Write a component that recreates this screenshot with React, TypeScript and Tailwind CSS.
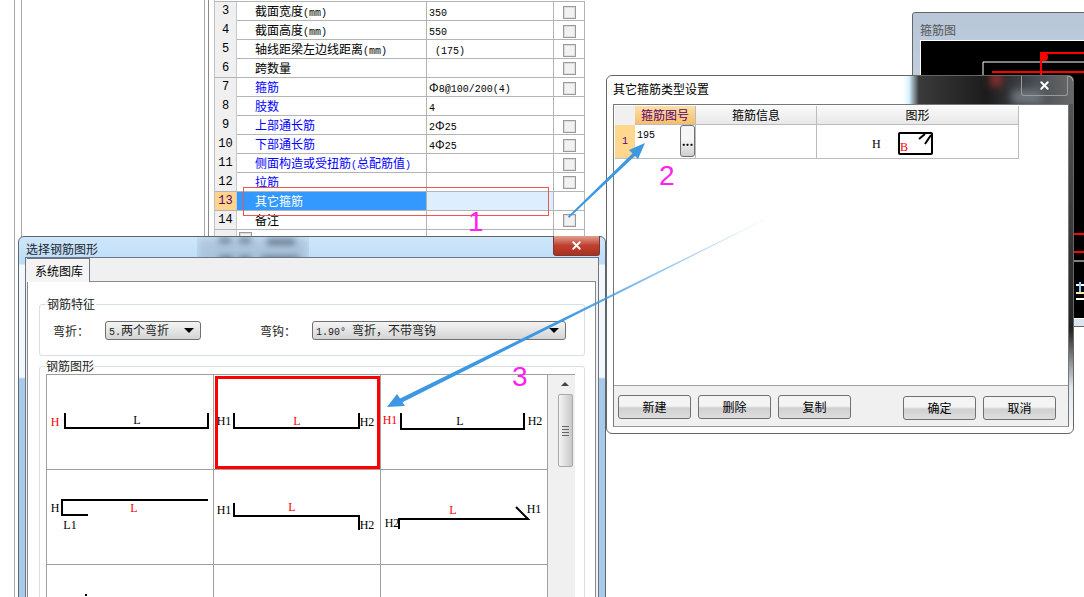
import type { ReactNode } from "react";
import { X } from "lucide-react";

const cjk = "font-['Noto_Sans_CJK_SC','Liberation_Sans',sans-serif]";
const mono = "font-['Liberation_Mono',monospace] text-[10px]";

interface Row {
  no: number;
  name: ReactNode;
  value?: ReactNode;
  link?: boolean;
  check?: boolean;
  active?: boolean;
}

const M = ({ children }: { children: ReactNode }) => <span className={mono}>{children}</span>;

const CheckBox = () => (
  <span className="block h-[13px] w-[13px] border border-[#9a9a9a] bg-[#f2f2f2] shadow-[inset_1px_1px_0_#dcdcdc,inset_-1px_-1px_0_#e2e2e2]" />
);

const rows: Row[] = [
  { no: 3, name: <>截面宽度<M>(mm)</M></>, value: <M>350</M>, check: true },
  { no: 4, name: <>截面高度<M>(mm)</M></>, value: <M>550</M>, check: true },
  { no: 5, name: <>轴线距梁左边线距离<M>(mm)</M></>, value: <M> (175)</M>, check: true },
  { no: 6, name: "跨数量", check: true },
  { no: 7, name: "箍筋", value: <>Φ<M>8@100/200(4)</M></>, link: true, check: true },
  { no: 8, name: "肢数", value: <M>4</M>, link: true },
  { no: 9, name: "上部通长筋", value: <><M>2</M>Φ<M>25</M></>, link: true, check: true },
  { no: 10, name: "下部通长筋", value: <><M>4</M>Φ<M>25</M></>, link: true, check: true },
  { no: 11, name: <>侧面构造或受扭筋<M>(</M>总配筋值<M>)</M></>, link: true, check: true },
  { no: 12, name: "拉筋", link: true, check: true },
  { no: 13, name: "其它箍筋", active: true },
  { no: 14, name: "备注", check: true },
];

const PropertyTable = () => (
  <div className="mt-[1px] w-[370px] border-t border-[#b4b4b4]">
    {rows.map((r) => (
      <div
        key={r.no}
        className="grid h-[19px] grid-cols-[22px_190px_127px_31px] border-b border-[#b4b4b4] text-[12px] leading-[18px]"
      >
        <div
          className={`border-r border-[#c8c8c8] text-center font-['Liberation_Mono',monospace] text-[12px] leading-[18px] ${
            r.active ? "bg-[#ffd48c] text-[#5a006e]" : "bg-[#f0f0f0] text-black"
          }`}
        >
          {r.no}
        </div>
        <div
          className={`border-r border-[#b4b4b4] pl-[18px] ${
            r.active ? "bg-[#3399ff] text-white" : r.link ? "text-[#0000ff]" : "text-black"
          }`}
        >
          {r.name}
        </div>
        <div className={`whitespace-pre border-r border-[#b4b4b4] pl-[2px] ${r.active ? "bg-[#ddeeff]" : ""}`}>
          {r.value}
        </div>
        <div className="flex items-center justify-center border-r border-[#b4b4b4]">{r.check && <CheckBox />}</div>
      </div>
    ))}
    <div className="grid h-[19px] grid-cols-[22px_190px_127px_31px]">
      <div className="border-r border-[#c8c8c8] bg-[#f0f0f0]" />
      <div className="border-r border-[#b4b4b4] pl-[2px] pt-[2px]">
        <CheckBox />
      </div>
      <div className="border-r border-[#b4b4b4]" />
      <div className="border-r border-[#b4b4b4]" />
    </div>
  </div>
);

const BackgroundApp = () => (
  <div className="flex h-full">
    <div className="w-[14px]" />
    <div className="w-[8px] border-x border-[#a8a8a8]" />
    <div className="w-[183px] border-r border-[#a8a8a8]" />
    <div className="w-[4px] border-r border-[#8a8a8a]" />
    <div className="w-[6px] border-r border-[#c0c0c0]" />
    <PropertyTable />
  </div>
);

const StirrupDrawing = () => (
  <div className="absolute left-[912px] top-[12px] flex h-[315px] w-[190px] flex-col rounded-t-[3px] border border-[#666] bg-[linear-gradient(#b8c7d8,#dce6f0)]">
    <div className="h-[28px] pl-[7px] pt-[9px] text-[12px] leading-[16px] text-[#555]">箍筋图</div>
    <div className="ml-[8px] h-[277px] bg-black outline outline-1 outline-white">
      <svg width="163" height="277" viewBox="921 41 163 277">
        <polyline points="983,75 983,62 1084,62" fill="none" stroke="#fff" />
        <polyline points="1084,53 1041,53 1041,75" fill="none" stroke="#f00" strokeWidth="2" />
        <circle cx="1044" cy="57" r="4" fill="#f00" />
        <line x1="992" y1="72" x2="1084" y2="72" stroke="#f00" strokeWidth="2" />
        <line x1="1074" y1="234" x2="1084" y2="234" stroke="#f00" strokeWidth="2" />
        <line x1="1074" y1="252" x2="1084" y2="252" stroke="#f00" strokeWidth="2" />
        <line x1="1074" y1="261" x2="1084" y2="261" stroke="#fff" />
        <rect x="1076" y="284" width="8" height="2" fill="#fff" />
        <rect x="1079" y="282" width="2" height="12" fill="#7fd0ff" />
        <rect x="1076" y="292" width="8" height="2" fill="#ffe9a0" />
        <rect x="1076" y="298" width="8" height="2" fill="#fff" />
      </svg>
    </div>
  </div>
);

const Btn = ({ label, className = "" }: { label: string; className?: string }) => (
  <button
    type="button"
    className={`h-[24px] w-[73px] rounded-[3px] border border-[#707070] bg-[linear-gradient(#f4f4f4_45%,#d0d0d0_55%,#dedede)] text-[12px] leading-[22px] text-black ${className}`}
  >
    {label}
  </button>
);

const OtherStirrupDialog = () => (
  <div className="absolute left-[606px] top-[75px] flex h-[359px] w-[468px] flex-col rounded-[6px] border border-[#666] bg-white pl-[6px] pr-[4px]">
    <div className="absolute inset-x-0 top-0 h-[28px] overflow-hidden rounded-t-[6px] bg-[linear-gradient(90deg,#fff_296px,#d6f4ff_302px,#3a3a3a_312px,#1c1c1c_380px,#4a4f55_430px,#6a6a6a_468px)]">
      <div className="absolute left-[384px] top-[-4px] h-[14px] w-[10px] bg-[#a03030] blur-[4px]" />
      <div className="absolute left-[405px] top-[14px] h-[14px] w-[30px] bg-[#70787e] blur-[4px]" />
    </div>
    <div className="absolute right-[5px] top-0 flex h-[20px] w-[47px] items-center justify-center rounded-b-[3px] border border-t-0 border-[#9a9a9a] text-white">
      <X size={13} strokeWidth={3.5} />
    </div>
    <div className="absolute bottom-[7px] right-0 top-[28px] w-[4px] bg-[linear-gradient(#555,#222_70%,#dfe8ee_88%,#f4f8fb)]" />
    <div className="relative h-[28px] pt-[5px] text-[12px] leading-[16px] text-black">其它箍筋类型设置</div>
    <div className="relative flex h-[323px] flex-col border border-[#777] border-b-[#999]">
      <div className="h-[280px] bg-white pl-[1px] pt-[1px]">
        <div className="grid w-[404px] grid-cols-[20px_61px_121px_202px] grid-rows-[19px_34px] text-[12px]">
          <div className="bg-[#f0f0f0]" />
          <div className="border-b border-r border-[#bcbcbc] bg-[linear-gradient(#fde0a8,#f5bf6c)] text-center leading-[18px] text-[#5a006e]">箍筋图号</div>
          <div className="border-b border-r border-[#bcbcbc] bg-[linear-gradient(#fafafa,#e8e8e8)] text-center leading-[18px]">箍筋信息</div>
          <div className="border-b border-r border-[#bcbcbc] bg-[linear-gradient(#fafafa,#e8e8e8)] text-center leading-[18px]">图形</div>
          <div className={`flex items-center justify-center border-b border-[#bcbcbc] bg-[#ffd78f] text-[#5a006e] ${mono}`}>1</div>
          <div className="relative border-b border-r border-[#bcbcbc] pl-[2px] leading-[15px]">
            <span className={mono}>195</span>
            <button
              type="button"
              className="absolute right-0 top-0 h-[32px] w-[15px] rounded-[3px] border border-[#707070] bg-[linear-gradient(#f6f6f6_45%,#cfcfcf)] text-[12px] font-bold leading-[24px]"
            >
              ...
            </button>
          </div>
          <div className="border-b border-r border-[#bcbcbc]" />
          <div className="border-b border-r border-[#bcbcbc]">
            <svg width="201" height="33" viewBox="818 124 201 33">
              <text x="873" y="147" fontFamily="Liberation Serif" fontSize="12">H</text>
              <rect x="900" y="132" width="33" height="21" rx="1" fill="none" stroke="#000" strokeWidth="2" />
              <line x1="920" y1="138" x2="926" y2="133" stroke="#000" strokeWidth="2" />
              <line x1="926" y1="143" x2="932" y2="134" stroke="#000" strokeWidth="2" />
              <text x="901" y="150" fontFamily="Liberation Serif" fontSize="12" fill="#f00">B</text>
            </svg>
          </div>
        </div>
      </div>
      <div className="flex flex-1 border-t border-[#a0a0a0] bg-[#f0f0f0] pl-[4px]">
        <div className="mt-[9px] flex gap-[7px]">
          <Btn label="新建" />
          <Btn label="删除" />
          <Btn label="复制" />
        </div>
        <div className="ml-[52px] mt-[10px] flex gap-[7px]">
          <Btn label="确定" />
          <Btn label="取消" className="w-[72px]" />
        </div>
      </div>
    </div>
  </div>
);

const Caret = () => <span className="border-x-[5px] border-t-[5px] border-x-transparent border-t-black" />;

const Select = ({ text, className }: { text: ReactNode; className: string }) => (
  <div
    className={`flex h-[19px] items-center justify-between rounded-[3px] border border-[#707070] bg-[linear-gradient(#f4f4f4,#d4d4d4)] pl-[3px] pr-[6px] text-[12px] leading-[17px] ${className}`}
  >
    <span>{text}</span>
    <Caret />
  </div>
);

const serif = { fontFamily: "Liberation Serif", fontSize: 12 };

// one picture cell, drawn in page coordinates
const Cell = ({ x, y, children }: { x: number; y: number; children?: ReactNode }) => (
  <div className="relative border-b border-r border-[#a0a0a0]">
    <svg width="166" height="94" viewBox={`${x} ${y} 166 94`} className="block">
      <g fill="none" stroke="#000" strokeWidth="2">
        {children}
      </g>
    </svg>
  </div>
);

const Label = ({ x, y, red, children }: { x: number; y: number; red?: boolean; children: string }) => (
  <text x={x} y={y} {...serif} textAnchor="middle" fill={red ? "#f00" : "#000"} stroke="none">
    {children}
  </text>
);

const ShapeGrid = () => (
  <div className="grid w-[502px] shrink-0 grid-cols-[167px_167px_167px] grid-rows-[95px_95px_40px] border-l border-t border-[#a0a0a0]">
    <Cell x={47} y={376}>
      <polyline points="65,414 65,429 208,429 208,414" />
      <Label x={55} y={427} red>H</Label>
      <Label x={137} y={425}>L</Label>
    </Cell>
    <Cell x={214} y={376}>
      <polyline points="234,414 234,429 359,429 359,414" />
      <Label x={224} y={426}>H1</Label>
      <Label x={367} y={427}>H2</Label>
      <Label x={297} y={426} red>L</Label>
      <rect x="216.5" y="378.5" width="162" height="90" stroke="#f00" strokeWidth="3" />
    </Cell>
    <Cell x={381} y={376}>
      <polyline points="401,414 401,430 524,430 524,414" />
      <Label x={390} y={425} red>H1</Label>
      <Label x={535} y={426}>H2</Label>
      <Label x={460} y={426}>L</Label>
    </Cell>
    <Cell x={47} y={471}>
      <polyline points="208,501 62,501 62,516 88,516" />
      <Label x={55} y={513}>H</Label>
      <Label x={134} y={513} red>L</Label>
      <Label x={70} y={530}>L1</Label>
    </Cell>
    <Cell x={214} y={471}>
      <polyline points="234,504 234,517 359,517 359,531" />
      <Label x={224} y={515}>H1</Label>
      <Label x={292} y={512} red>L</Label>
      <Label x={367} y={530}>H2</Label>
    </Cell>
    <Cell x={381} y={471}>
      <polyline points="399,530 399,520 528,520 516,508" />
      <Label x={392} y={528}>H2</Label>
      <Label x={453} y={515} red>L</Label>
      <Label x={534} y={514}>H1</Label>
    </Cell>
    <Cell x={47} y={566}>
      <line x1="86" y1="595" x2="86" y2="597" />
    </Cell>
    <Cell x={214} y={566} />
    <Cell x={381} y={566} />
  </div>
);

const ScrollBar = () => (
  <div className="flex h-[230px] w-[27px] shrink-0 flex-col items-end border-t border-[#a0a0a0] bg-[#f0f0f0] pr-[2px]">
    <div className="mr-[4px] mt-[7px] border-x-[4px] border-b-[4px] border-x-transparent border-b-[#444]" />
    <div className="mt-[8px] flex h-[73px] w-[15px] flex-col items-center justify-center gap-[2px] rounded-[2px] border border-[#a8a8a8] bg-[linear-gradient(90deg,#f4f4f4,#c8c8c8)]">
      <span className="h-px w-[7px] bg-[#666]" />
      <span className="h-px w-[7px] bg-[#666]" />
      <span className="h-px w-[7px] bg-[#666]" />
      <span className="h-px w-[7px] bg-[#666]" />
    </div>
  </div>
);

const ShapeDialog = () => (
  <div className="absolute left-[18px] top-[236px] flex h-[400px] w-[588px] flex-col rounded-t-[6px] border border-[#5c6670] bg-[linear-gradient(#cfe6fb_0,#bcdcf8_27px,#f4f8fc_28px,#f4f8fc_140px,#a9c9ea_142px,#a9c9ea)] pl-[6px] pr-[6px]">
    <div className="absolute left-[178px] top-0 h-[28px] w-[112px] overflow-hidden">
      <div className="absolute inset-0 bg-[#8fa4bc] opacity-45 blur-[5px]" />
      <div className="absolute left-[22px] top-[1px] h-[5px] w-[12px] bg-[#66788c] blur-[3px]" />
      <div className="absolute left-[42px] top-[1px] h-[5px] w-[12px] bg-[#66788c] blur-[3px]" />
      <div className="absolute left-[70px] top-[2px] h-[6px] w-[28px] bg-[#66788c] blur-[3px]" />
      <div className="absolute left-[22px] top-[19px] h-[6px] w-[14px] bg-[#66788c] blur-[3px]" />
      <div className="absolute left-[42px] top-[19px] h-[6px] w-[12px] bg-[#66788c] blur-[3px]" />
      <div className="absolute left-[64px] top-[19px] h-[6px] w-[38px] bg-[#66788c] blur-[3px]" />
    </div>
    <div className="absolute right-[5px] top-[-1px] flex h-[20px] w-[47px] items-center justify-center rounded-b-[3px] border border-t-0 border-[#7a3a30] bg-[linear-gradient(#e0a090,#c04030_50%,#a83020)] text-white">
      <X size={13} strokeWidth={3.5} />
    </div>
    <div className="relative h-[27px] pl-[1px] pt-[4px] text-[12px] leading-[16px] text-[#1a2530]">选择钢筋图形</div>
    <div className="relative flex-1 border-l border-r border-t border-[#6a7684] bg-[#f0f0f0] pl-[1px] pr-[2px]">
      <div className="relative z-10 mb-[-1px] h-[24px] w-[63px] border-r border-t border-[#6a7684] bg-[#f4f4f4] pl-[8px] text-[12px] leading-[24px] text-black">
        系统图库
      </div>
      <div className="h-[400px] border border-[#8a8a8a] bg-white px-[11px] pt-[14px] text-[12px] text-[#222]">
        <fieldset className="h-[60px] w-[546px] rounded-[3px] border border-[#d5dfe5] pl-[6px]">
          <legend className="px-[1px] leading-[16px]">钢筋特征</legend>
          <div className="mt-[9px] flex items-center">
            <span className="w-[59px] pl-[7px]">弯折：</span>
            <Select className="w-[96px]" text={<><M>5.</M>两个弯折</>} />
            <span className="ml-[59px] w-[52px]">弯钩：</span>
            <Select className="w-[254px]" text={<><M>1.90° </M>弯折，不带弯钩</>} />
          </div>
        </fieldset>
        <fieldset className="mt-[2px] h-[300px] w-[546px] rounded-[3px] border border-[#d5dfe5] pl-[6px]">
          <legend className="ml-[-1px] px-[1px] leading-[16px]">钢筋图形</legend>
          <div className="flex">
            <ShapeGrid />
            <ScrollBar />
          </div>
        </fieldset>
      </div>
    </div>
  </div>
);

const Annotations = () => (
  <>
    <div className="absolute left-[243px] top-[187px] h-[29px] w-[306px] border border-[#ee5555]" />
    <span className="absolute left-[468px] top-[206px] font-['Liberation_Sans',sans-serif] text-[28px] leading-[32px] text-[#ff22ee]">1</span>
    <span className="absolute left-[659px] top-[160px] font-['Liberation_Sans',sans-serif] text-[28px] leading-[32px] text-[#ff22ee]">2</span>
    <span className="absolute left-[512px] top-[361px] font-['Liberation_Sans',sans-serif] text-[28px] leading-[32px] text-[#ff22ee]">3</span>
    <svg className="pointer-events-none absolute left-0 top-0" width="1084" height="597" viewBox="0 0 1084 597">
      <defs>
        <linearGradient id="tail" gradientUnits="userSpaceOnUse" x1="763" y1="220" x2="560" y2="320">
          <stop offset="0" stopColor="#3d97e3" stopOpacity="0.1" />
          <stop offset="1" stopColor="#3d97e3" />
        </linearGradient>
      </defs>
      <polygon points="568,216.5 569,218 637,154 635,151" fill="#3d97e3" />
      <polygon points="645,143 629,150 638,159" fill="#3d97e3" />
      <polygon points="763,220 763,220.6 401,403 399,399" fill="url(#tail)" />
      <polygon points="387,407 397,394 405,406" fill="#3d97e3" />
    </svg>
  </>
);

export default function App() {
  return (
    <div className={`relative h-[597px] w-[1084px] overflow-hidden bg-white ${cjk}`}>
      <BackgroundApp />
      <StirrupDrawing />
      <OtherStirrupDialog />
      <ShapeDialog />
      <Annotations />
    </div>
  );
}
